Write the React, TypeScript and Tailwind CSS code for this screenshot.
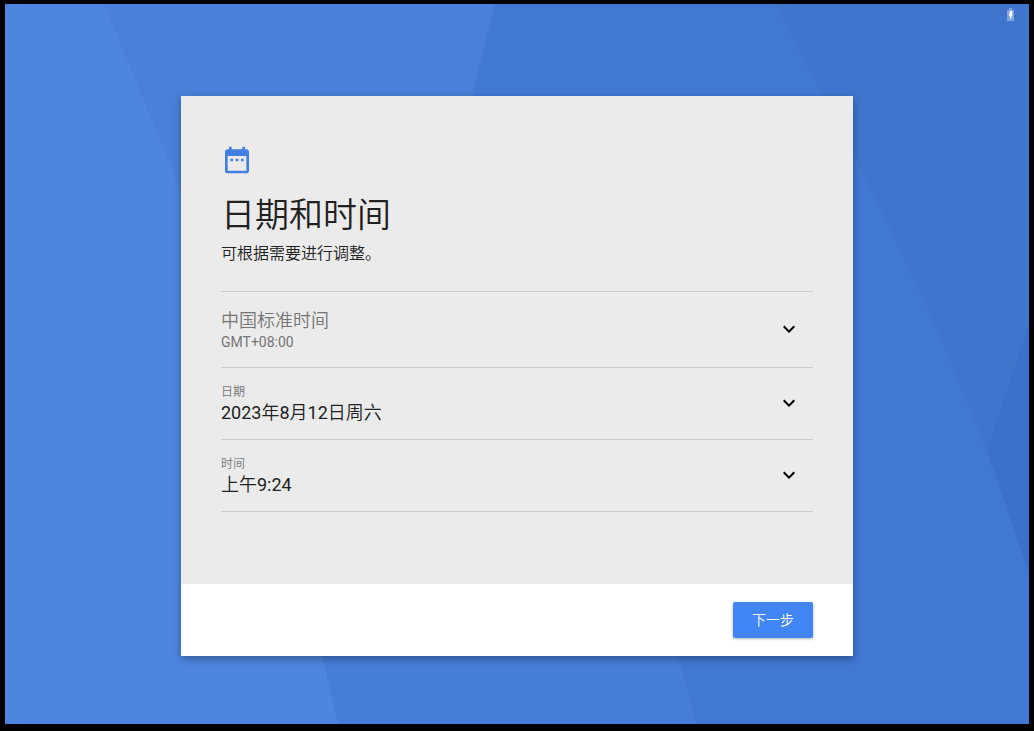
import React, { useState } from "react";
import { MdDateRange, MdExpandMore } from "react-icons/md";

type PickerRowProps = {
  id: string;
  label: string;
  value: string;
};

function Wallpaper() {
  return (
    <svg
      className="absolute inset-0 h-full w-full"
      viewBox="0 0 1024 720"
      preserveAspectRatio="none"
      aria-hidden="true"
    >
      <rect width="1024" height="720" fill="#4e86df" />
      <path d="M99 0L137 92L172 179L268 420H385L467 92L490 0Z" fill="#4b80da" />
      <path d="M268 420H640L692 720H333L317 652Z" fill="#467dd7" />
      <path d="M490 0H1024V720H691L673 652L385 420L467 92Z" fill="#4178d2" />
      <path d="M770 0H1024V340L982 447Q925 300 857 168L818 90Z" fill="#3f75cc" />
      <path d="M1024 320V570L982 447Z" fill="#3c71ca" />
    </svg>
  );
}

function BatteryIcon() {
  return (
    <svg width="7" height="13" viewBox="0 0 7 13" role="img" aria-label="正在充电">
      <path d="M2 0H5V2H7V13H0V2H2Z" fill="#fff" fillOpacity="0.35" />
      <path d="M3 3H5.5L5 6H6L3 11.5V8H2Z" fill="#fff" />
    </svg>
  );
}

function PickerRow({ id, label, value }: PickerRowProps) {
  return (
    <button
      type="button"
      aria-haspopup="dialog"
      aria-labelledby={`${id}-label ${id}-value`}
      className="flex w-full items-center justify-between border-b border-[#cbcbcb] pt-[14px] pb-[15px] pr-3 text-left"
    >
      <span className="flex flex-col">
        <span id={`${id}-label`} className="text-xs leading-5 text-[#757575]">
          {label}
        </span>
        <span id={`${id}-value`} className="text-lg leading-[22px] text-[#212121]">
          {value}
        </span>
      </span>
      <MdExpandMore className="h-6 w-6 text-black" />
    </button>
  );
}

export default function App() {
  const [zone, setZone] = useState("Asia/Shanghai");

  return (
    <div className="flex min-h-screen bg-black px-[5px] pt-1 pb-[7px] font-['Roboto','Noto_Sans_CJK_SC_DemiLight','Noto_Sans_CJK_SC',sans-serif]">
      <div className="relative flex flex-1 flex-col overflow-hidden">
        <Wallpaper />

        <header className="relative flex h-6 items-start justify-end pt-1 pr-[15px]">
          <BatteryIcon />
        </header>

        <main className="relative mx-auto mt-[68px] mb-[68px] flex w-full max-w-2xl flex-1 flex-col bg-[#ebebeb] shadow-[0_3px_8px_rgba(0,0,0,0.32)]">
          <div className="flex-1 px-10 pt-12">
            <MdDateRange className="h-8 w-8 text-[#427fe3]" />
            <h1 className="mt-[19px] text-[34px] leading-10 font-[350] text-[#212121]">日期和时间</h1>
            <p className="mt-[7px] text-base leading-6 font-[350] text-[#212121]">可根据需要进行调整。</p>

            <div className="mt-[25px] border-t border-[#cbcbcb]">
              <div className="flex items-center justify-between border-b border-[#cbcbcb] pt-4 pb-[17px] pr-3 text-[#757575]">
                <div className="flex flex-1 flex-col">
                  <select
                    aria-label="时区"
                    aria-describedby="zone-offset"
                    value={zone}
                    onChange={(e) => setZone(e.target.value)}
                    className="w-full appearance-none bg-transparent text-lg leading-[26px] font-[350] outline-none"
                  >
                    <option value="Asia/Shanghai">中国标准时间</option>
                  </select>
                  <span id="zone-offset" className="text-sm leading-4">
                    GMT+08:00
                  </span>
                </div>
                <MdExpandMore className="h-6 w-6 text-black" />
              </div>
              <PickerRow id="date" label="日期" value="2023年8月12日周六" />
              <PickerRow id="time" label="时间" value="上午9:24" />
            </div>
          </div>

          <footer className="flex h-[72px] items-center justify-end bg-white px-10">
            <button
              type="button"
              className="h-9 w-20 rounded-xs bg-[#4285f4] text-sm text-white shadow-[0_1px_3px_rgba(0,0,0,0.3)]"
            >
              下一步
            </button>
          </footer>
        </main>
      </div>
    </div>
  );
}
